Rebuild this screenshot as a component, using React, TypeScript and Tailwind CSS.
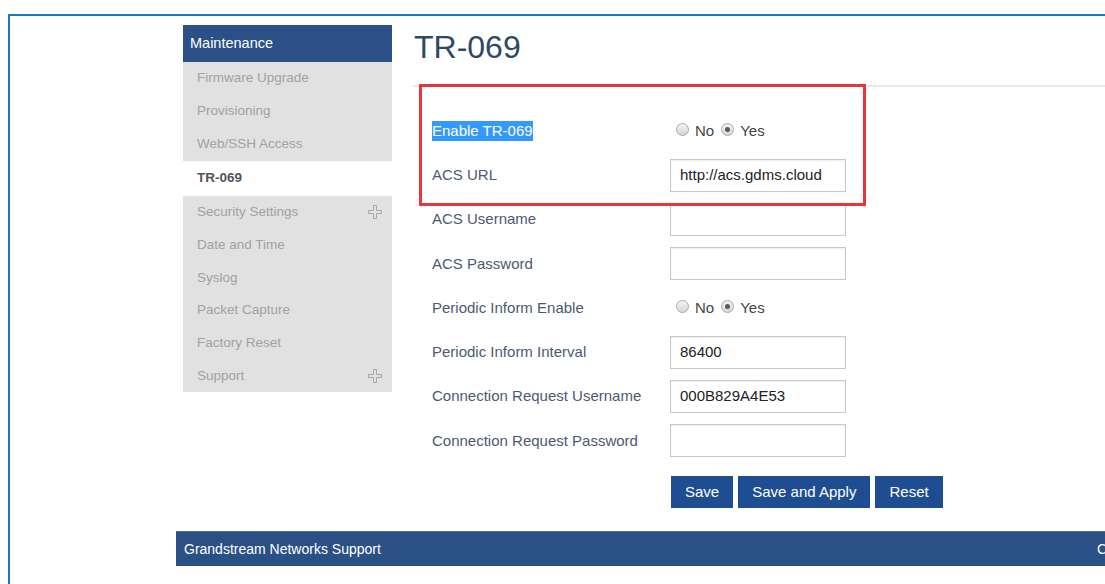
import type { ReactNode } from 'react';

const font = { fontFamily: '"Liberation Sans", Arial, sans-serif' };

const menuTop = ['Firmware Upgrade', 'Provisioning', 'Web/SSH Access'];
const menuBottom = [
  { label: 'Security Settings', expand: true },
  { label: 'Date and Time' },
  { label: 'Syslog' },
  { label: 'Packet Capture' },
  { label: 'Factory Reset' },
  { label: 'Support', expand: true },
];

function PlusOutline() {
  return (
    <svg width="14" height="14" viewBox="0 0 14 14" className="shrink-0">
      <path d="M5.5 .5h3v5h5v3h-5v5h-3v-5h-5v-3h5z" fill="none" stroke="#a8a8a8" strokeWidth="1" />
    </svg>
  );
}

function Sidebar() {
  return (
    <aside className="w-[209px] shrink-0">
      <div className="h-[37px] bg-[#2b5088] pl-[7px] flex items-center text-[14.5px] text-white">
        Maintenance
      </div>
      <div className="bg-[#e1e1e1]">
        {menuTop.map(item => (
          <div key={item} className="h-[33px] pl-[14px] flex items-center text-[13.5px] text-[#a2a2a2]">
            {item}
          </div>
        ))}
      </div>
      <div className="h-[35px] pl-[14px] flex items-center text-[13.5px] font-bold text-[#555]">TR-069</div>
      <div className="bg-[#e1e1e1]">
        {menuBottom.map(item => (
          <div
            key={item.label}
            className="h-[32.7px] pl-[14px] pr-[10px] flex items-center justify-between text-[13.5px] text-[#a2a2a2]"
          >
            <span>{item.label}</span>
            {item.expand && <PlusOutline />}
          </div>
        ))}
      </div>
    </aside>
  );
}

function Radio({ checked }: { checked?: boolean }) {
  return (
    <span className="relative inline-flex items-center justify-center w-[13px] h-[13px] rounded-full border border-[#a9a9a9] bg-gradient-to-b from-[#f4f4f4] to-[#d6d6d6] -translate-y-[2px]">
      {checked && <span className="w-[5px] h-[5px] rounded-full bg-[#5a5a5a]" />}
    </span>
  );
}

function YesNo() {
  return (
    <div className="flex items-center pl-[6px] text-[15px] text-[#444]">
      <Radio />
      <span className="ml-[6px]">No</span>
      <span className="ml-[7px] flex items-center">
        <Radio checked />
      </span>
      <span className="ml-[6px]">Yes</span>
    </div>
  );
}

function TextField({ value = '' }: { value?: string }) {
  return (
    <div className="w-[176px] h-[33px] border border-[#c8c8c8] shadow-[inset_0_1px_2px_rgba(0,0,0,0.07)] bg-white pl-[9px] flex items-center text-[15px] text-[#222]">
      {value}
    </div>
  );
}

function Row({ label, children }: { label: ReactNode; children: ReactNode }) {
  return (
    <div className="h-[44.25px] flex items-center">
      <div className="w-[257px] pl-[19px] text-[15px] text-[#4b5a72] shrink-0">{label}</div>
      {children}
    </div>
  );
}

export default function App() {
  return (
    <div className="w-[1105px] h-[584px] overflow-hidden bg-white pt-[14px] pl-[8px]" style={font}>
      <div className="h-full border-l-2 border-t-2 border-[#1b74c8] pt-[9px]">
        <div className="flex pl-[173px]">
          <Sidebar />

          <main className="relative ml-[21px] flex-1 pt-[4px]">
            <h1 className="h-[37px] pl-[1px] text-[32px] leading-[37px] text-[#2f4868]">TR-069</h1>
            <div className="mt-[19px] h-[2px] bg-[#e8e8e8]" />

            <div className="mt-[22px]">
              <Row
                label={<span className="bg-[#3399ff] text-white leading-[20px] inline-block">Enable TR-069</span>}
              >
                <YesNo />
              </Row>
              <Row label="ACS URL">
                <TextField value="http://acs.gdms.cloud" />
              </Row>
              <Row label="ACS Username">
                <TextField />
              </Row>
              <Row label="ACS Password">
                <TextField />
              </Row>
              <Row label="Periodic Inform Enable">
                <YesNo />
              </Row>
              <Row label="Periodic Inform Interval">
                <TextField value="86400" />
              </Row>
              <Row label="Connection Request Username">
                <TextField value="000B829A4E53" />
              </Row>
              <Row label="Connection Request Password">
                <TextField />
              </Row>
            </div>

            <div className="mt-[13px] ml-[258px] flex gap-[5px]">
              {['Save', 'Save and Apply', 'Reset'].map(b => (
                <button
                  key={b}
                  className="h-[32px] px-[14px] bg-[#1e4d92] text-white text-[15px]"
                >
                  {b}
                </button>
              ))}
            </div>

            {/* highlight frame around the first two settings */}
            <div className="absolute left-[6px] top-[59px] w-[447px] h-[122px] border-[3px] border-[#e8353b] pointer-events-none" />
          </main>
        </div>

        <footer className="mt-[23px] ml-[166px] h-[35px] bg-[#2b5086] border-t border-[#4a6c9e] flex items-center text-[14px] text-white whitespace-nowrap">
          <div className="w-[921px] pl-[8px] shrink-0">Grandstream Networks Support</div>
          <div className="shrink-0">Copyright © Grandstream Networks, Inc. All Rights Reserved.</div>
        </footer>
      </div>
    </div>
  );
}
